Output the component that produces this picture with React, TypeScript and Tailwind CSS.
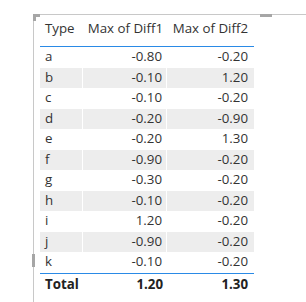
const rows = [
  { type: 'a', d1: '-0.80', d2: '-0.20' },
  { type: 'b', d1: '-0.10', d2: '1.20' },
  { type: 'c', d1: '-0.10', d2: '-0.20' },
  { type: 'd', d1: '-0.20', d2: '-0.90' },
  { type: 'e', d1: '-0.20', d2: '1.30' },
  { type: 'f', d1: '-0.90', d2: '-0.20' },
  { type: 'g', d1: '-0.30', d2: '-0.20' },
  { type: 'h', d1: '-0.10', d2: '-0.20' },
  { type: 'i', d1: '1.20', d2: '-0.20' },
  { type: 'j', d1: '-0.90', d2: '-0.20' },
  { type: 'k', d1: '-0.10', d2: '-0.20' },
]

export default function App() {
  return (
    <div className="w-[306px] h-[302px] bg-white overflow-hidden pt-[14px] pl-[33px] font-['Open_Sans',sans-serif] text-[13.3px] text-[#333333]">
      <div className="relative h-[300px] border-t border-l border-[#c8c8c8] pl-[6px]">
        {/* resize handles */}
        <div className="absolute -left-[1px] -top-[1px] w-[7px] h-[3px] bg-[#a6a6a6]" />
        <div className="absolute -left-[1px] -top-[1px] w-[3px] h-[7px] bg-[#a6a6a6]" />
        <div className="absolute left-[226px] -top-[1px] w-[12px] h-[3px] bg-[#a6a6a6]" />
        <div className="absolute -left-[2px] top-[239px] w-[3px] h-[13px] bg-[#a6a6a6]" />

        <div className="w-[214px]">
          <div className="grid grid-cols-[43px_84px_87px] h-[32px] items-end pb-[7px] border-b border-[#2a8ae6]">
            <div className="pl-[5px]">Type</div>
            <div className="text-right pr-[4px] whitespace-nowrap">Max of Diff1</div>
            <div className="text-right pr-[6px] whitespace-nowrap">Max of Diff2</div>
          </div>
          {rows.map((r, i) => (
            <div
              key={r.type}
              className={`grid grid-cols-[43px_84px_87px] h-[20.5px] items-center ${i % 2 === 1 ? 'bg-[#ededed]' : 'bg-white'}`}
            >
              <div className="pl-[5px] h-full flex items-center border-r border-white">{r.type}</div>
              <div className="pr-[4px] h-full flex items-center justify-end border-r border-white">{r.d1}</div>
              <div className="pr-[6px] text-right">{r.d2}</div>
            </div>
          ))}
          <div className="grid grid-cols-[43px_84px_87px] h-[24px] items-center border-t border-[#2a8ae6] font-bold text-[#222222]">
            <div className="pl-[5px]">Total</div>
            <div className="text-right pr-[4px]">1.20</div>
            <div className="text-right pr-[6px]">1.30</div>
          </div>
        </div>
      </div>
    </div>
  )
}
